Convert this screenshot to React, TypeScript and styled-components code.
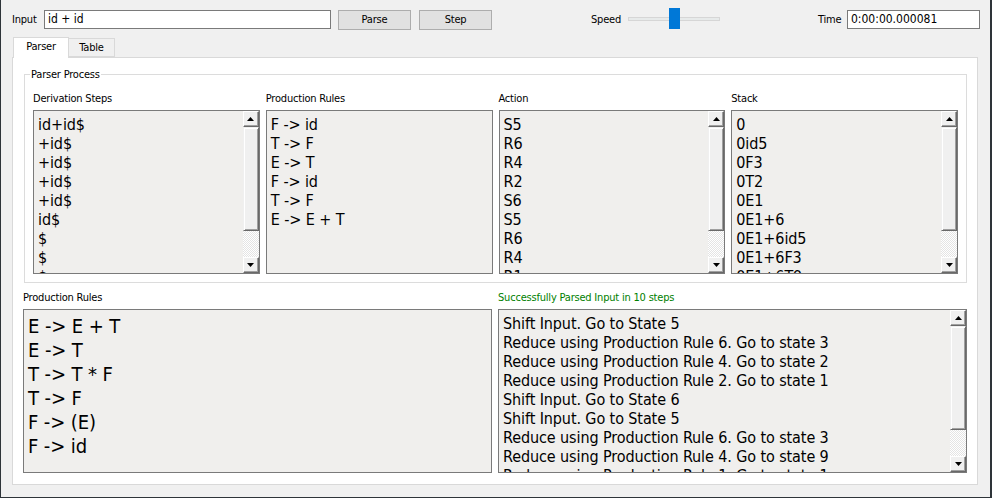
import React from "react";
import styled, { createGlobalStyle } from "styled-components";

const Global = createGlobalStyle`
  html, body { margin: 0; padding: 0; background: #f0f0f0; }
  * { box-sizing: border-box; }
`;

const FONT = `"DejaVu Sans", "Liberation Sans", sans-serif`;

const Window = styled.div`
  width: 992px;
  height: 498px;
  background: #f0f0f0;
  border-left: 1px solid #2e3439;
  border-right: 2px solid #2e3439;
  border-bottom: 1px solid #2e3439;
  font-family: ${FONT};
  font-stretch: condensed;
  font-size: 11px;
  letter-spacing: -0.2px;
  color: #000;
  overflow: hidden;
`;

const TopBar = styled.div`
  display: flex;
  align-items: flex-start;
  height: 37px;
  padding: 10px 0 0 11px;
`;

const Label = styled.span<{ $w: number; $ml?: number }>`
  width: ${(p) => p.$w}px;
  margin-left: ${(p) => p.$ml ?? 0}px;
  line-height: 19px;
  white-space: nowrap;
`;

const TextInput = styled.div<{ $w: number }>`
  width: ${(p) => p.$w}px;
  height: 19px;
  background: #fff;
  border: 1px solid #7a7a7a;
  padding: 0 3px;
  line-height: 17px;
  font-size: 12px;
  letter-spacing: 0;
  white-space: nowrap;
`;

const Button = styled.div<{ $ml: number }>`
  width: 73px;
  height: 20px;
  margin-left: ${(p) => p.$ml}px;
  background: #e1e1e1;
  border: 1px solid #adadad;
  text-align: center;
  line-height: 18px;
`;

const Slider = styled.div`
  position: relative;
  width: 92px;
  height: 21px;
  margin-top: -2px;
  display: flex;
  align-items: center;
`;

const Groove = styled.div`
  width: 100%;
  height: 4px;
  background: #e7eaea;
  border: 1px solid #d6d6d6;
`;

const Handle = styled.div`
  position: absolute;
  left: 41px;
  top: 0;
  width: 11px;
  height: 21px;
  background: #0078d7;
`;

const TabBar = styled.div`
  display: flex;
  align-items: flex-end;
  height: 20px;
  padding-left: 12px;
  position: relative;
  z-index: 1;
`;

const Tab = styled.div<{ $active?: boolean; $w: number }>`
  width: ${(p) => p.$w}px;
  height: ${(p) => (p.$active ? 21 : 19)}px;
  margin-bottom: ${(p) => (p.$active ? -1 : 0)}px;
  background: ${(p) => (p.$active ? "#fff" : "#f0f0f0")};
  border: 1px solid #d9d9d9;
  border-bottom: ${(p) => (p.$active ? "none" : "1px solid #d9d9d9")};
  ${(p) => (p.$active ? "" : "border-left: none;")}
  text-align: center;
  line-height: ${(p) => (p.$active ? 18 : 17)}px;
`;

const Pane = styled.div`
  margin-left: 11px;
  width: 966px;
  height: 428px;
  background: #fff;
  border: 1px solid #d9d9d9;
  padding: 16px 10px 11px 10px;
  display: flex;
  flex-direction: column;
`;

const Group = styled.div`
  position: relative;
  margin-left: 1px;
  border: 1px solid #dcdcdc;
  padding: 17px 8px 8px 8px;
  display: grid;
  grid-template-columns: repeat(4, 1fr);
  column-gap: 6px;
`;

const GroupTitle = styled.span`
  position: absolute;
  top: -7px;
  left: 5px;
  padding: 0 1px;
  background: #fff;
  line-height: 13px;
`;

const Column = styled.div`
  display: flex;
  flex-direction: column;
  min-width: 0;
`;

const ColLabel = styled.div<{ $color?: string }>`
  line-height: 13px;
  margin-bottom: 5px;
  color: ${(p) => p.$color ?? "#000"};
  white-space: nowrap;
`;

const Bottom = styled.div`
  display: grid;
  grid-template-columns: 1fr 1fr;
  column-gap: 6px;
  margin-top: 8px;
`;

const ListBox = styled.div`
  display: flex;
  height: 164px;
  background: #f0efed;
  border: 1px solid #7a7a7a;
  overflow: hidden;
`;

const ListItems = styled.div<{ $size: number; $lh: number }>`
  flex: 1;
  min-width: 0;
  padding: 4px 4px 0 4px;
  font-size: ${(p) => p.$size}px;
  line-height: ${(p) => p.$lh}px;
  letter-spacing: -0.1px;
  white-space: nowrap;
  overflow: hidden;
`;

const ScrollBar = styled.div`
  width: 16px;
  display: flex;
  flex-direction: column;
  flex-shrink: 0;
`;

const ArrowBtn = styled.div`
  height: 16px;
  background: #f0f0f0;
  border: 1px solid;
  border-color: #ffffff #696969 #696969 #ffffff;
  box-shadow: inset -1px -1px 0 #a0a0a0;
  display: flex;
  align-items: center;
  justify-content: center;
`;

const Thumb = styled.div`
  height: 104px;
  background: #f0f0f0;
  border: 1px solid;
  border-color: #f0f0f0 #696969 #696969 #f0f0f0;
  box-shadow: inset 1px 1px 0 #ffffff, inset -1px -1px 0 #a0a0a0;
`;

const Track = styled.div`
  flex: 1;
  background-image: repeating-conic-gradient(#ffffff 0 25%, #e4e4e4 0 50%);
  background-size: 2px 2px;
`;

const Arrow = ({ down }: { down?: boolean }) => (
  <svg width="7" height="4" viewBox="0 0 7 4">
    <polygon points={down ? "0,0 7,0 3.5,4" : "3.5,0 7,4 0,4"} fill="#000" />
  </svg>
);

const Scroll = () => (
  <ScrollBar>
    <ArrowBtn>
      <Arrow />
    </ArrowBtn>
    <Thumb />
    <Track />
    <ArrowBtn>
      <Arrow down />
    </ArrowBtn>
  </ScrollBar>
);

const List = ({
  items,
  scroll,
  size = 16,
  lh = 19,
}: {
  items: string[];
  scroll?: boolean;
  size?: number;
  lh?: number;
}) => (
  <ListBox>
    <ListItems $size={size} $lh={lh}>
      {items.map((t, i) => (
        <div key={i}>{t}</div>
      ))}
    </ListItems>
    {scroll && <Scroll />}
  </ListBox>
);

const derivation = ["id+id$", "+id$", "+id$", "+id$", "+id$", "id$", "$", "$", "$"];
const applied = ["F -> id", "T -> F", "E -> T", "F -> id", "T -> F", "E -> E + T"];
const actions = ["S5", "R6", "R4", "R2", "S6", "S5", "R6", "R4", "R1"];
const stack = ["0", "0id5", "0F3", "0T2", "0E1", "0E1+6", "0E1+6id5", "0E1+6F3", "0E1+6T9"];
const grammar = ["E -> E + T", "E -> T", "T -> T * F", "T -> F", "F -> (E)", "F -> id"];
const log = [
  "Shift Input. Go to State 5",
  "Reduce using Production Rule 6. Go to state 3",
  "Reduce using Production Rule 4. Go to state 2",
  "Reduce using Production Rule 2. Go to state 1",
  "Shift Input. Go to State 6",
  "Shift Input. Go to State 5",
  "Reduce using Production Rule 6. Go to state 3",
  "Reduce using Production Rule 4. Go to state 9",
  "Reduce using Production Rule 1. Go to state 1",
];

export default function App() {
  return (
    <Window>
      <Global />
      <TopBar>
        <Label $w={32}>Input</Label>
        <TextInput $w={287}>id + id</TextInput>
        <Button $ml={7}>Parse</Button>
        <Button $ml={8}>Step</Button>
        <Label $w={37} $ml={99}>Speed</Label>
        <Slider>
          <Groove />
          <Handle />
        </Slider>
        <Label $w={29} $ml={98}>Time</Label>
        <TextInput $w={133}>0:00:00.000081</TextInput>
      </TopBar>
      <TabBar>
        <Tab $active $w={56}>Parser</Tab>
        <Tab $w={46}>Table</Tab>
      </TabBar>
      <Pane>
        <Group>
          <GroupTitle>Parser Process</GroupTitle>
          <Column>
            <ColLabel>Derivation Steps</ColLabel>
            <List items={derivation} scroll />
          </Column>
          <Column>
            <ColLabel>Production Rules</ColLabel>
            <List items={applied} />
          </Column>
          <Column>
            <ColLabel>Action</ColLabel>
            <List items={actions} scroll />
          </Column>
          <Column>
            <ColLabel>Stack</ColLabel>
            <List items={stack} scroll />
          </Column>
        </Group>
        <Bottom>
          <Column>
            <ColLabel>Production Rules</ColLabel>
            <List items={grammar} size={20} lh={24} />
          </Column>
          <Column>
            <ColLabel $color="#008000">Successfully Parsed Input in 10 steps</ColLabel>
            <List items={log} scroll />
          </Column>
        </Bottom>
      </Pane>
    </Window>
  );
}
